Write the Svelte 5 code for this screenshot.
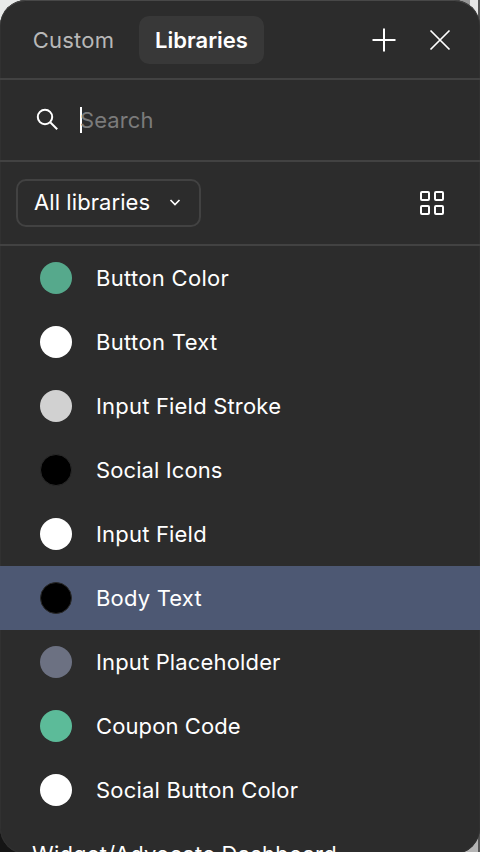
<script>
  const styles = [
    { name: 'Button Color', color: '#56a98c', tracking: 0.3 },
    { name: 'Button Text', color: '#ffffff', tracking: 0.34 },
    { name: 'Input Field Stroke', color: '#d1d1d1' },
    { name: 'Social Icons', color: '#000000', ring: true, tracking: 0.1 },
    { name: 'Input Field', color: '#ffffff' },
    { name: 'Body Text', color: '#000000', ring: true },
    { name: 'Input Placeholder', color: '#6c7182', tracking: 0.15 },
    { name: 'Coupon Code', color: '#5cbb99', tracking: 0.1 },
    { name: 'Social Button Color', color: '#ffffff' }
  ];
  let selected = $state('Body Text');
</script>

<div class="stage">
  <main class="panel">
    <header>
      <nav>
        <button class="tab custom">Custom</button>
        <button class="tab active">Libraries</button>
      </nav>
      <div class="actions">
        <button class="icon" aria-label="Add">
          <svg width="24" height="24" viewBox="0 0 24 24"><path d="M12 .5v23M.5 12h23" /></svg>
        </button>
        <button class="icon" aria-label="Close">
          <svg class="thin" width="24" height="24" viewBox="0 0 24 24"><path d="M2.500 2.500l19 19M21.500 2.500l-19 19" /></svg>
        </button>
      </div>
    </header>

    <div class="search">
      <svg width="24" height="24" viewBox="0 0 24 24"><circle cx="10" cy="9" r="7.2" /><path d="M15.200 14.200l7 7" /></svg>
      <div class="field"><span>Search</span></div>
    </div>

    <div class="filter">
      <button class="select">
        <span>All libraries</span>
        <svg class="thin" width="12" height="10" viewBox="0 0 12 10"><path d="M1.500 3L6 7.500 10.500 3" /></svg>
      </button>
      <button class="icon" aria-label="Grid view">
        <svg width="24" height="24" viewBox="0 0 24 24">
          <rect x="1" y="1" width="8" height="8" rx="1" /><rect x="15" y="1" width="8" height="8" rx="1" />
          <rect x="1" y="15" width="8" height="8" rx="1" /><rect x="15" y="15" width="8" height="8" rx="1" />
        </svg>
      </button>
    </div>

    <div class="list">
      {#each styles as style}
        <button class="row" class:selected={selected === style.name} onclick={() => (selected = style.name)}>
          <span class="swatch" class:ring={style.ring} style:background={style.color}></span>
          <span style:letter-spacing={`${style.tracking ?? 0.19}px`}>{style.name}</span>
        </button>
      {/each}
      <div class="group">Widget/Advocate Dashboard</div>
    </div>
  </main>
</div>

<style>
  .stage {
    box-sizing: border-box;
    width: 480px;
    height: 852px;
    overflow: hidden;
    background:
      linear-gradient(#555, #555) 478px 0 / 2px 852px no-repeat,
      linear-gradient(#999, #999) 458px 0 / 12px 30px no-repeat,
      linear-gradient(#e6e6e6, #e6e6e6) 470px 0 / 8px 30px no-repeat,
      linear-gradient(#b4b4b4, #b4b4b4) 400px 800px / 78px 52px no-repeat,
      linear-gradient(#151515, #151515) 0 800px / 400px 52px no-repeat,
      #e8eae9;
    font-family: Inter, "Liberation Sans", sans-serif;
    font-size: 22px;
    letter-spacing: 0.2px;
    color: #fff;
  }
  .panel {
    box-sizing: border-box;
    height: 854px;
    border-radius: 26px;
    background: #2c2c2c;
    box-shadow: inset 0 1px 0 #484848, inset 0 0 0 1px #313131;
    overflow: hidden;
  }
  button {
    margin: 0;
    padding: 0;
    border: 0;
    background: none;
    font: inherit;
    letter-spacing: inherit;
    color: inherit;
  }
  svg {
    display: block;
    flex: none;
    fill: none;
    stroke: #fff;
    stroke-width: 2;
  }
  .thin { stroke-width: 1.7; }
  header, .search, .filter {
    box-sizing: border-box;
    display: flex;
    align-items: center;
    border-bottom: 2px solid #424242;
  }
  header {
    height: 80px;
    padding: 0 28px 0 17px;
    justify-content: space-between;
  }
  nav, .actions { display: flex; align-items: center; }
  nav { gap: 9px; padding-top: 2px; }
  .actions { gap: 32px; padding-top: 2px; }
  .tab {
    box-sizing: border-box;
    height: 48px;
    border-radius: 10px;
  }
  .custom { width: 113px; color: #b8b8b8; }
  .active { width: 125px; background: #383838; font-weight: 560; letter-spacing: 0; }
  .search {
    height: 82px;
    padding: 0 36px 0 35px;
    gap: 21px;
  }
  .field {
    flex: 1;
    height: 26px;
    line-height: 26px;
    border-left: 2px solid #fff;
    color: #7b7b7b;
    letter-spacing: 0.1px;
  }
  .field span { margin-left: -2px; }
  .filter {
    height: 84px;
    padding: 0 36px 0 16px;
    justify-content: space-between;
  }
  .select {
    box-sizing: border-box;
    display: flex;
    align-items: center;
    justify-content: space-between;
    width: 185px;
    height: 48px;
    padding: 0 18px 2px 16px;
    border: 2px solid #424242;
    border-radius: 10px;
    letter-spacing: 0.08px;
  }
  .row {
    display: flex;
    align-items: center;
    gap: 24px;
    width: 100%;
    height: 64px;
    padding: 0 40px;
    text-align: left;
  }
  .selected { background: #4d5873; }
  .swatch {
    box-sizing: border-box;
    width: 32px;
    height: 32px;
    border-radius: 50%;
  }
  .ring { border: 1px solid #292929; }
  .group { height: 64px; line-height: 64px; padding-left: 32px; }
</style>
